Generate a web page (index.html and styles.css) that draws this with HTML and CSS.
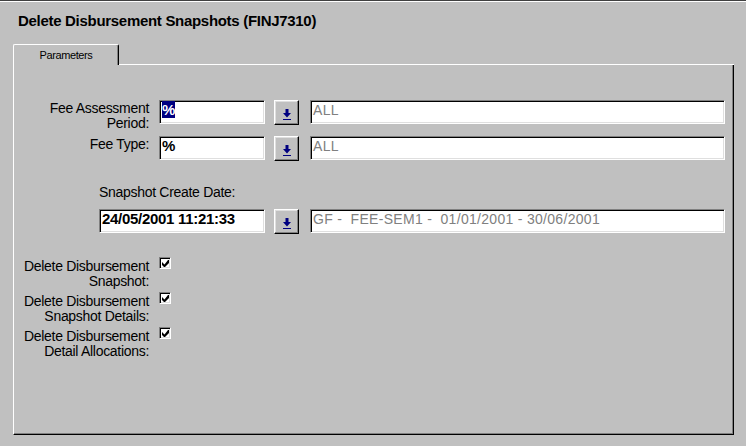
FILE: index.html
```html
<!DOCTYPE html>
<html lang="en">
<head>
  <meta charset="UTF-8">
  <title>Delete Disbursement Snapshots (FINJ7310)</title>
  <link rel="stylesheet" href="styles.css">
</head>
<body>
  <div class="window">
    <h1 class="title">Delete Disbursement Snapshots (FINJ7310)</h1>

    <div class="tabs">
      <div class="tab">Parameters</div>
      <div class="tab-fill"></div>
    </div>

    <div class="panel">
      <div class="field-row row-period">
        <div class="field-label">Fee Assessment<br>Period:</div>
        <div class="input code"><span class="selected">%</span></div>
        <button type="button" class="lookup">
          <svg width="8" height="11" viewBox="0 0 8 11"><path d="M2.5 0h3v4H8l-4 4.5L0 4h2.5z M0 10h8v1H0z" fill="#000080"/></svg>
        </button>
        <div class="input desc">ALL</div>
      </div>

      <div class="field-row row-type">
        <div class="field-label">Fee Type:</div>
        <div class="input code">%</div>
        <button type="button" class="lookup">
          <svg width="8" height="11" viewBox="0 0 8 11"><path d="M2.5 0h3v4H8l-4 4.5L0 4h2.5z M0 10h8v1H0z" fill="#000080"/></svg>
        </button>
        <div class="input desc">ALL</div>
      </div>

      <div class="date-label">Snapshot Create Date:</div>
      <div class="field-row row-date">
        <div class="input date">24/05/2001 11:21:33</div>
        <button type="button" class="lookup">
          <svg width="8" height="11" viewBox="0 0 8 11"><path d="M2.5 0h3v4H8l-4 4.5L0 4h2.5z M0 10h8v1H0z" fill="#000080"/></svg>
        </button>
        <div class="input desc">GF -&nbsp; FEE-SEM1 -&nbsp; 01/01/2001 - 30/06/2001</div>
      </div>

      <div class="checks">
        <div class="check-row">
          <div class="field-label">Delete Disbursement<br>Snapshot:</div>
          <span class="checkbox"><svg width="7" height="7" viewBox="0 0 7 7"><path d="M6 0h1v3L3 7H2L0 5V2l2.5 2.5z" fill="#000"/></svg></span>
        </div>
        <div class="check-row">
          <div class="field-label">Delete Disbursement<br>Snapshot Details:</div>
          <span class="checkbox"><svg width="7" height="7" viewBox="0 0 7 7"><path d="M6 0h1v3L3 7H2L0 5V2l2.5 2.5z" fill="#000"/></svg></span>
        </div>
        <div class="check-row">
          <div class="field-label">Delete Disbursement<br>Detail Allocations:</div>
          <span class="checkbox"><svg width="7" height="7" viewBox="0 0 7 7"><path d="M6 0h1v3L3 7H2L0 5V2l2.5 2.5z" fill="#000"/></svg></span>
        </div>
      </div>
    </div>
  </div>
</body>
</html>
```

FILE: styles.css
```css
body {
  margin: 0;
  background-color: #c0c0c0;
  font-family: "Liberation Sans", Arial, sans-serif;
  color: #000;
}

.window {
  height: 445px;
  border-top: 1px solid #404040;
  box-shadow: inset 0 1px #fff;
  padding-left: 13px;
}

.title {
  margin: 0;
  padding: 11px 0 0 5px;
  height: 18px;
  font-size: 15px;
  font-weight: bold;
  letter-spacing: -0.3px;
  line-height: 18px;
}

.tabs {
  display: flex;
  width: 721px;
  margin-top: 14px;
}

.tab {
  width: 104px;
  height: 20px;
  border-top: 1px solid #fff;
  border-left: 1px solid #fff;
  border-right: 1px solid #000;
  border-radius: 2px 2px 0 0;
  box-shadow: inset -1px 0 #808080;
  font-size: 11px;
  letter-spacing: -0.4px;
  line-height: 21px;
  text-align: center;
}

.tab-fill {
  flex: 1;
  border-bottom: 1px solid #fff;
}

.panel {
  box-sizing: border-box;
  width: 721px;
  height: 370px;
  border-left: 1px solid #fff;
  border-right: 1px solid #000;
  border-bottom: 1px solid #000;
  box-shadow: inset -1px -1px #808080;
  padding-top: 35px;
  font-size: 14px;
  letter-spacing: -0.3px;
}

.field-row {
  display: flex;
  align-items: flex-start;
}

.field-label {
  width: 135px;
  margin-right: 10px;
  padding-top: 1px;
  text-align: right;
  line-height: 15px;
  white-space: nowrap;
}

.input {
  box-sizing: border-box;
  height: 24px;
  background-color: #fff;
  border: 1px solid;
  border-color: #808080 #fff #fff #808080;
  box-shadow: inset 1px 1px #000, inset -1px -1px #dfdfdf;
  padding: 1px 2px;
  line-height: 16px;
  letter-spacing: 0;
  white-space: pre;
  overflow: hidden;
}

.code {
  width: 106px;
  font-size: 15px;
  font-weight: bold;
}

.selected {
  background-color: #000080;
  color: #fff;
}

.desc {
  width: 415px;
  margin-left: 11px;
  color: #808080;
  font-size: 14px;
  letter-spacing: 0.3px;
}

.lookup {
  box-sizing: border-box;
  width: 25px;
  height: 25px;
  margin: 0 0 0 9px;
  padding: 3px 0 0;
  background-color: #c0c0c0;
  border: 1px solid;
  border-color: #fff #000 #000 #fff;
  box-shadow: inset -1px -1px #808080, inset 1px 1px #dfdfdf;
  display: flex;
  align-items: center;
  justify-content: center;
}

.row-period {
  margin-bottom: 5px;
}

.date-label {
  margin: 24px 0 0 85px;
  line-height: 15px;
}

.row-date {
  margin: 9px 0 0 85px;
}

.date {
  width: 166px;
  font-size: 15px;
  font-weight: bold;
  letter-spacing: -0.3px;
}

.checks {
  margin-top: 25px;
  display: flex;
  flex-direction: column;
  gap: 5px;
}

.check-row {
  display: flex;
  align-items: flex-start;
}

.check-row .field-label {
  padding-top: 0;
}

.checkbox {
  box-sizing: border-box;
  width: 12px;
  height: 12px;
  margin-top: -2px;
  background-color: #fff;
  border: 1px solid;
  border-color: #808080 #fff #fff #808080;
  box-shadow: inset 1px 1px #000, inset -1px -1px #dfdfdf;
  display: flex;
  align-items: center;
  justify-content: center;
}
```
